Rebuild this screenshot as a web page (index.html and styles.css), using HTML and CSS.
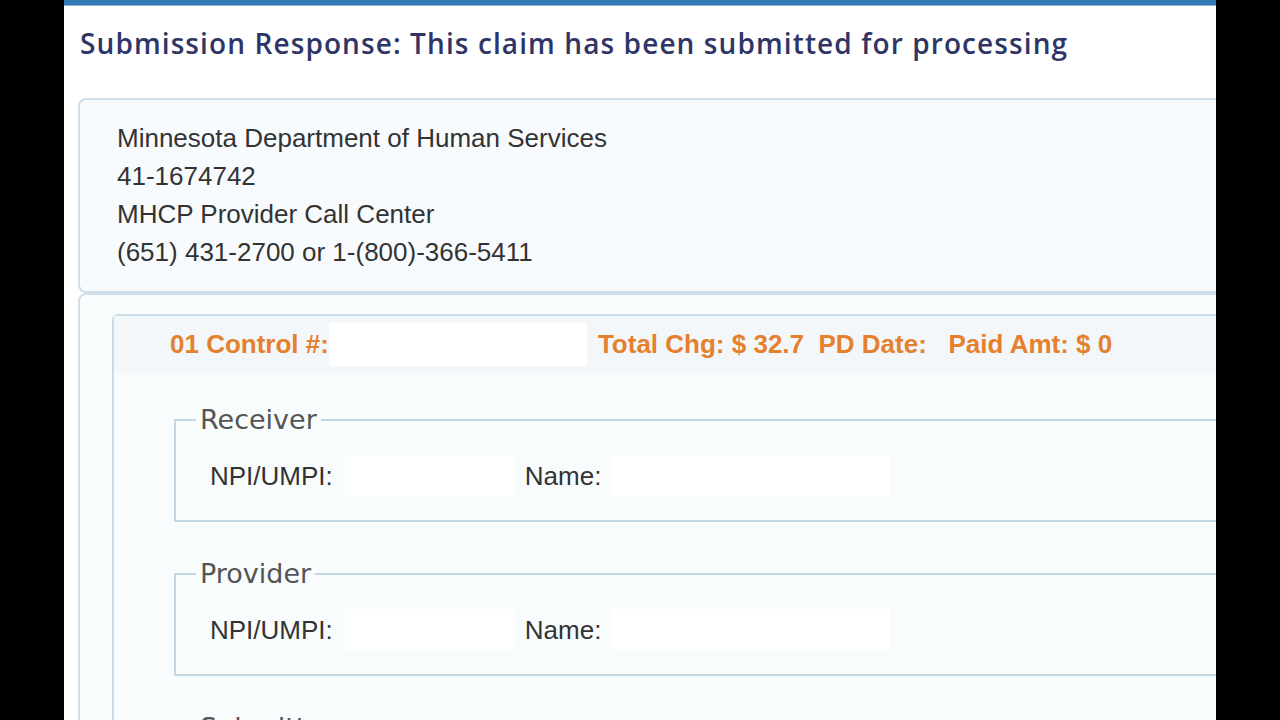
FILE: index.html
```
<!DOCTYPE html>
<html lang="en">
<head>
    <meta charset="UTF-8">
    <meta name="viewport" content="width=device-width, initial-scale=1.0">
    <title>Submission Response</title>
    <link rel="stylesheet" href="styles.css">
</head>
<body>
    <div class="page">
        <div class="top-bar"></div>
        <h1 class="page-title">Submission Response: This claim has been submitted for processing</h1>

        <div class="payer-box">
            <p>Minnesota Department of Human Services</p>
            <p>41-1674742</p>
            <p>MHCP Provider Call Center</p>
            <p>(651) 431-2700 or 1-(800)-366-5411</p>
        </div>

        <div class="claims-box">
            <div class="claim-panel">
                <div class="claim-header">
                    <span>01 Control #:</span>
                    <span class="blank control-blank"></span>
                    <span>Total Chg: $ 32.7&nbsp;&nbsp;PD Date:&nbsp;&nbsp;&nbsp;Paid Amt: $ 0</span>
                </div>
                <div class="claim-body">
                    <fieldset class="party">
                        <legend>Receiver</legend>
                        <div class="party-row">
                            <span class="label">NPI/UMPI:</span>
                            <span class="blank npi-blank"></span>
                            <span class="label">Name:</span>
                            <span class="blank name-blank"></span>
                        </div>
                    </fieldset>
                    <fieldset class="party">
                        <legend>Provider</legend>
                        <div class="party-row">
                            <span class="label">NPI/UMPI:</span>
                            <span class="blank npi-blank"></span>
                            <span class="label">Name:</span>
                            <span class="blank name-blank"></span>
                        </div>
                    </fieldset>
                    <fieldset class="party">
                        <legend>Submitter</legend>
                    </fieldset>
                </div>
            </div>
        </div>
    </div>
</body>
</html>
```

FILE: styles.css
```
html, body {
    margin: 0;
    padding: 0;
    background-color: #000;
}
body {
    font-family: "Liberation Sans", Arial, sans-serif;
    color: #333;
}
.page {
    width: 1152px;
    height: 720px;
    margin: 0 auto;
    background-color: #fff;
    overflow: hidden;
}
.top-bar {
    height: 5px;
    background-color: #337ab7;
    border-bottom: 1px solid #8fb6d8;
}
.page-title {
    margin: 0;
    padding: 18px 0 0 16px;
    height: 92px;
    box-sizing: border-box;
    font-family: "Open Sans", "DejaVu Sans", sans-serif;
    font-weight: 600;
    font-size: 28px;
    line-height: 38px;
    letter-spacing: 1.1px;
    color: #2f3566;
}
.payer-box {
    margin: 0 -30px 0 14px;
    padding: 19px 37px 20px;
    border: 2px solid #cfdfea;
    border-radius: 8px;
    background-color: #f8fbfd;
}
.payer-box p {
    margin: 0;
    font-size: 26px;
    line-height: 38px;
}
.claims-box {
    margin: 0 -30px 0 14px;
    padding: 19px 0 0 32px;
    border: 2px solid #cfdfea;
    border-radius: 8px;
    background-color: #f8fcfd;
    height: 500px;
}
.claim-panel {
    border: 2px solid #c8dbe8;
    border-radius: 6px;
    background-color: #f8fcfd;
    height: 480px;
}
.claim-header {
    height: 57px;
    display: flex;
    align-items: center;
    padding-left: 56px;
    background-color: #f3f7fa;
    color: #e5802e;
    font-weight: 700;
    font-size: 26px;
}
.blank {
    display: inline-block;
    background-color: #fff;
}
.control-blank {
    width: 258px;
    height: 43px;
    margin: 0 11px 0 0;
}
.claim-body {
    padding: 31px 0 0 60px;
}
.party {
    margin: 0 -10px 36px 0;
    padding: 20px 0 23px 34px;
    border: 2px solid #c5d6e4;
    border-radius: 0;
}
.party legend {
    margin-left: -14px;
    padding: 0 4px;
    font-family: "DejaVu Sans", sans-serif;
    font-size: 27px;
    color: #555;
}
.party-row {
    display: flex;
    align-items: center;
    font-size: 26px;
    color: #333;
}
.npi-blank {
    width: 170px;
    height: 42px;
    margin: 0 10px 0 12px;
}
.name-blank {
    width: 278px;
    height: 42px;
    margin-left: 11px;
}
```
